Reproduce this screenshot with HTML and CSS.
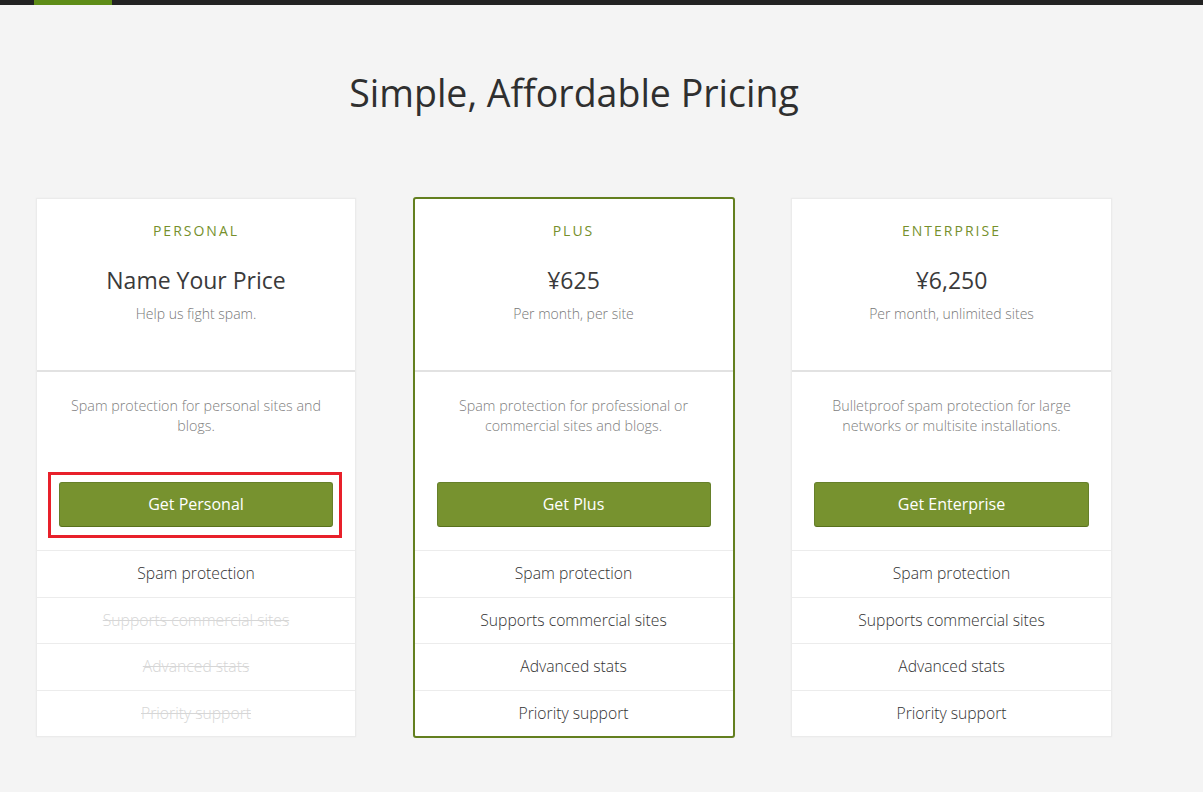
FILE: index.html
```html
<!DOCTYPE html>
<html lang="en">
<head>
<meta charset="utf-8">
<title>Pricing</title>
<link rel="stylesheet" href="styles.css">
</head>
<body>
<div class="topbar"><span class="topbar-accent"></span></div>
<main class="page">
  <h1 class="title">Simple, Affordable Pricing</h1>
  <div class="plans">
    <section class="plan">
      <div class="plan-head">
        <div class="tier">PERSONAL</div>
        <div class="price">Name Your Price</div>
        <div class="sub">Help us fight spam.</div>
      </div>
      <div class="plan-body">
        <p class="desc">Spam protection for personal sites and blogs.</p>
        <div class="btn-wrap highlighted"><a class="btn">Get Personal</a></div>
      </div>
      <ul class="features">
        <li>Spam protection</li>
        <li class="off">Supports commercial sites</li>
        <li class="off">Advanced stats</li>
        <li class="off">Priority support</li>
      </ul>
    </section>
    <section class="plan featured">
      <div class="plan-head">
        <div class="tier">PLUS</div>
        <div class="price">¥625</div>
        <div class="sub">Per month, per site</div>
      </div>
      <div class="plan-body">
        <p class="desc">Spam protection for professional or commercial sites and blogs.</p>
        <div class="btn-wrap"><a class="btn">Get Plus</a></div>
      </div>
      <ul class="features">
        <li>Spam protection</li>
        <li>Supports commercial sites</li>
        <li>Advanced stats</li>
        <li>Priority support</li>
      </ul>
    </section>
    <section class="plan">
      <div class="plan-head">
        <div class="tier">ENTERPRISE</div>
        <div class="price">¥6,250</div>
        <div class="sub">Per month, unlimited sites</div>
      </div>
      <div class="plan-body">
        <p class="desc">Bulletproof spam protection for large networks or multisite installations.</p>
        <div class="btn-wrap"><a class="btn">Get Enterprise</a></div>
      </div>
      <ul class="features">
        <li>Spam protection</li>
        <li>Supports commercial sites</li>
        <li>Advanced stats</li>
        <li>Priority support</li>
      </ul>
    </section>
  </div>
</main>
</body>
</html>
```

FILE: styles.css
```css
* { box-sizing: border-box; }
html, body { margin: 0; padding: 0; }
body {
  background: #f4f4f4;
  font-family: "Open Sans", "Noto Sans", "Liberation Sans", sans-serif;
  color: #333;
}
.topbar {
  height: 5px;
  background: #222;
  padding-left: 34px;
}
.topbar-accent {
  display: block;
  width: 78px;
  height: 5px;
  background: #5e8c17;
}
.page {
  width: 1076px;
  margin-left: 36px;
}
.title {
  margin: 65px 0 0;
  font-size: 37.5px;
  line-height: 45px;
  font-weight: 400;
  color: #2f2f2f;
  text-align: center;
}
.plans {
  margin-top: 83px;
  display: grid;
  grid-template-columns: 320px 322px 321px;
  column-gap: 56.5px;
  align-items: start;
}
.plan {
  background: #fff;
  border: 1px solid #ebebeb;
  box-shadow: 0 0 2px rgba(0,0,0,0.04);
  text-align: center;
}
.plan.featured {
  border: 2px solid #637f1f;
  border-radius: 3px;
  margin-top: -1px;
}
.plan-head {
  padding: 22px 10px 46px;
  border-bottom: 2px solid #e2e2e2;
}
.tier {
  font-size: 14px;
  line-height: 20px;
  letter-spacing: 2px;
  color: #76902c;
}
.price {
  margin-top: 24px;
  font-size: 23px;
  line-height: 30px;
  color: #3a3a3a;
}
.sub {
  margin-top: 9px;
  font-size: 14px;
  line-height: 20px;
  font-weight: 300;
  color: #777;
}
.plan-body {
  padding: 24px 22px 23px;
}
.desc {
  margin: 0 6px;
  font-size: 14.3px;
  line-height: 20px;
  font-weight: 300;
  color: #808080;
  min-height: 40px;
}
.btn-wrap {
  margin-top: 46px;
  position: relative;
}
.btn {
  display: block;
  height: 45px;
  line-height: 43px;
  background: #77922f;
  border: 1px solid #66802a;
  border-bottom-color: #58711c;
  border-radius: 3px;
  color: #fff;
  font-size: 16px;
  font-weight: 400;
  text-decoration: none;
}
.highlighted::after {
  content: "";
  position: absolute;
  top: -10px;
  left: -11px;
  right: -9px;
  bottom: -11px;
  border: 3px solid #e8202a;
  pointer-events: none;
}
.features {
  list-style: none;
  margin: 0;
  padding: 0;
}
.features li {
  border-top: 1px solid #ececec;
  height: 46.6px;
  line-height: 44.6px;
  font-size: 15.7px;
  font-weight: 300;
  color: #333;
}
.features li.off {
  color: #d6d6d6;
  text-decoration: line-through;
}
```
